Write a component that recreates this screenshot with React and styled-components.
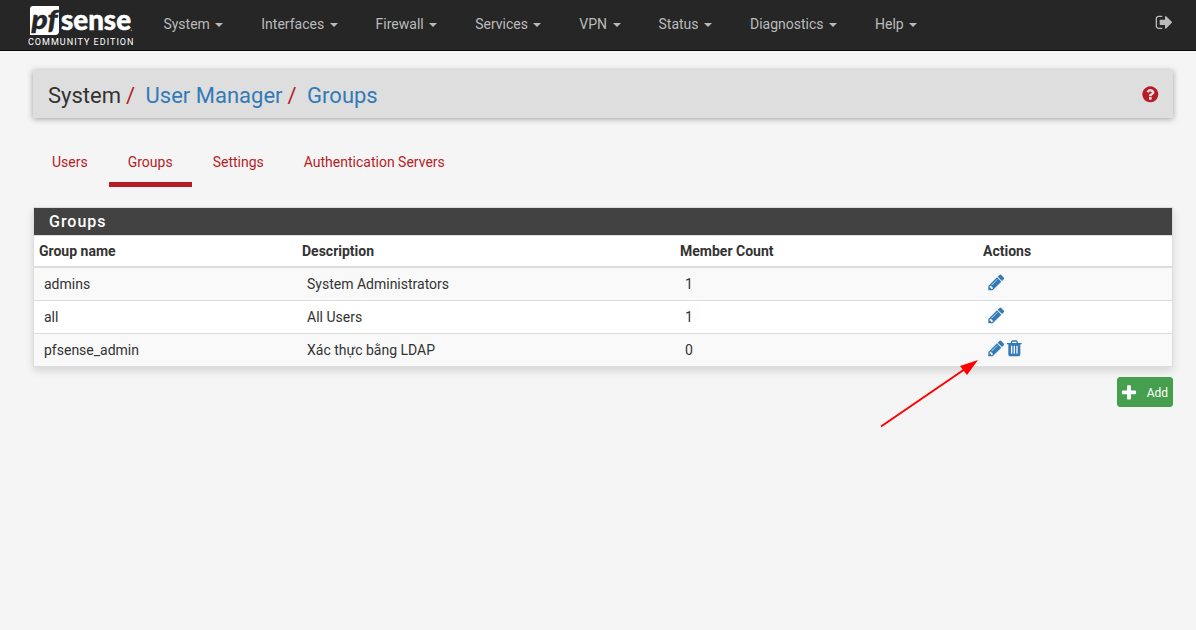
import React from "react";
import styled, { createGlobalStyle, css } from "styled-components";

const GlobalStyle = createGlobalStyle`
  *, *::before, *::after { box-sizing: border-box; }
  body {
    margin: 0;
    background: #f5f5f5;
    color: #333;
    font: 14px/20px Roboto, "Liberation Sans", sans-serif;
  }
  a { color: inherit; text-decoration: none; }
`;

const Navbar = styled.header`
  display: flex;
  align-items: flex-start;
  height: 51px;
  padding-right: 22px;
  background: #262626;
  border-bottom: 1px solid #080808;
`;

const Brand = styled.a`
  display: block;
  width: 117px;
  margin-left: 27px;
  height: 50px;
`;

const LogoMark = styled.svg`
  display: block;
  width: 117px;
  height: 50px;
`;

const Menu = styled.nav`
  display: flex;
  flex: 1;
  padding-left: 0.4px;
`;

const MenuItem = styled.a`
  display: flex;
  align-items: center;
  height: 20px;
  margin-top: 14px;
  padding: 0 19px;
  color: #bbb;

  &::after {
    content: "";
    margin: 2px 0 0 5.45px;
    border-top: 4px solid;
    border-left: 4px solid transparent;
    border-right: 4px solid transparent;
  }
`;

const Icon = styled.svg`
  display: block;
  flex: none;
  width: ${(p) => p.$size}px;
  height: ${(p) => p.$size}px;
  fill: currentColor;
`;

const Logout = styled.a`
  margin-top: 13.3px;
  color: #bbb;
`;

const Page = styled.main`
  padding: 19px 23px 0 33px;
`;

const TitleBar = styled.div`
  display: flex;
  align-items: center;
  justify-content: space-between;
  height: 48px;
  padding: 0 13.7px 0 15px;
  background: #dedede;
  box-shadow: 0 1px 6px rgba(0, 0, 0, 0.35);
`;

const Breadcrumb = styled.h1`
  display: flex;
  margin: 0;
  padding-top: 4px;
  font-size: 22px;
  font-weight: 400;
  line-height: 24px;
`;

const Crumb = styled.span`
  color: ${(p) => (p.$link ? "#337ab7" : "#333")};

  &:not(:first-child)::before {
    content: "/";
    padding: 0 10.5px 0 5px;
    color: #b71c26;
  }
`;

const Help = styled.a`
  padding-top: 1px;
  color: #b71c26;
`;

const Tabs = styled.div`
  display: flex;
  gap: 2px;
  margin-top: 25px;
`;

const Tab = styled.a`
  height: 44px;
  padding: 9px 19px 0;
  color: #b71c26;
  border-bottom: 5px solid ${(p) => (p.$active ? "#b71c26" : "transparent")};
`;

const Panel = styled.section`
  margin-top: 20px;
  border: 1px solid #ddd;
  background: #fff;
  box-shadow: 0 4px 8px rgba(0, 0, 0, 0.13);
`;

const PanelTitle = styled.h2`
  margin: 0;
  height: 27px;
  padding-left: 15px;
  background: #424242;
  color: #fff;
  font-size: 16px;
  font-weight: 500;
  line-height: 27px;
  letter-spacing: 1px;
`;

const columns = css`
  display: grid;
  grid-template-columns: 263px 378px 303px 1fr;
`;

const HeadRow = styled.div`
  ${columns}
  height: 33px;
  border-top: 1px solid #ddd;
  border-bottom: 2px solid #ddd;
  padding-left: 5px;
  font-weight: 700;
  line-height: 30px;
`;

const Row = styled.div`
  ${columns}
  height: ${(p) => (p.$first ? 32 : 33)}px;
  padding-left: 10px;
  line-height: 32px;
  border-top: ${(p) => (p.$first ? "0" : "1px solid #ddd")};
  background: ${(p) => (p.$striped ? "#f9f9f9" : "#fff")};
`;

const Actions = styled.div`
  display: flex;
  padding-top: 5px;
  margin-left: -1.5px;
  color: #337ab7;
`;

const Footer = styled.div`
  display: flex;
  justify-content: flex-end;
  margin-top: 10px;
`;

const AddButton = styled.button`
  display: flex;
  align-items: center;
  justify-content: space-between;
  width: 56px;
  height: 30px;
  padding: 1px 4px 0 2px;
  border: 1px solid #43a047;
  border-radius: 3px;
  background: #469f4e;
  color: #fff;
  font: 12px/18px Roboto, sans-serif;
`;

const Pointer = styled.svg`
  position: absolute;
  left: 875px;
  top: 355px;
  width: 110px;
  height: 76px;
  pointer-events: none;
`;

const paths = {
  pencil:
    "M491 1536l91-91-235-235-91 91v107h128v128h107zm523-928q0-22-22-22-10 0-17 7l-542 542q-7 7-7 17 0 22 22 22 10 0 17-7l542-542q7-7 7-17zm-54-192l416 416-832 832h-416v-416zm683 96q0 53-37 90l-166 166-416-416 166-165q36-38 90-38 53 0 91 38l235 234q37 39 37 91z",
  trash:
    "M704 1376v-704q0-14-9-23t-23-9h-64q-14 0-23 9t-9 23v704q0 14 9 23t23 9h64q14 0 23-9t9-23zm256 0v-704q0-14-9-23t-23-9h-64q-14 0-23 9t-9 23v704q0 14 9 23t23 9h64q14 0 23-9t9-23zm256 0v-704q0-14-9-23t-23-9h-64q-14 0-23 9t-9 23v704q0 14 9 23t23 9h64q14 0 23-9t9-23zm-544-992h448l-48-117q-7-9-17-11h-317q-10 2-17 11zm928 32v64q0 14-9 23t-23 9h-96v948q0 83-47 143.5t-113 60.5h-832q-66 0-113-58.5t-47-141.5v-952h-96q-14 0-23-9t-9-23v-64q0-14 9-23t23-9h309l70-167q15-37 54-63t79-26h320q40 0 79 26t54 63l70 167h309q14 0 23 9t9 23z",
  logout:
    "M704 1440q0 4 1 20t.5 26.5-3 23.5-10 19.5-20.5 6.5h-320q-119 0-203.5-84.5t-84.5-203.5v-704q0-119 84.5-203.5t203.5-84.5h320q13 0 22.5 9.5t9.5 22.5q0 4 1 20t.5 26.5-3 23.5-10 19.5-20.5 6.5h-320q-66 0-113 47t-47 113v704q0 66 47 113t113 47h312l11.5 1 11.5 3 8 5.5 7 9 2 13.5zm928-544q0 26-19 45l-544 544q-19 19-45 19t-45-19-19-45v-288h-448q-26 0-45-19t-19-45v-384q0-26 19-45t45-19h448v-288q0-26 19-45t45-19 45 19l544 544q19 19 19 45z",
  help:
    "M1024 1376v-192q0-14-9-23t-23-9h-192q-14 0-23 9t-9 23v192q0 14 9 23t23 9h192q14 0 23-9t9-23zm256-672q0-88-55.5-163t-138.5-116-170-41q-243 0-371 213-15 24 8 42l132 100q7 6 19 6 16 0 25-12 53-68 86-92 34-24 86-24 48 0 85.5 26t37.5 59q0 38-20 61t-68 45q-63 28-115.5 86.5t-52.5 125.5v36q0 14 9 23t23 9h192q14 0 23-9t9-23q0-19 21.5-49.5t54.5-49.5q32-18 49-28.5t46-35 44.5-48 28-60.5 12.5-81zm384 192q0 209-103 385.5t-279.5 279.5-385.5 103-385.5-103-279.5-279.5-103-385.5 103-385.5 279.5-279.5 385.5-103 385.5 103 279.5 279.5 103 385.5z",
  plus:
    "M1600 736v192q0 40-28 68t-68 28h-416v416q0 40-28 68t-68 28h-192q-40 0-68-28t-28-68v-416h-416q-40 0-68-28t-28-68v-192q0-40 28-68t68-28h416v-416q0-40 28-68t68-28h192q40 0 68 28t28 68v416h416q40 0 68 28t28 68z",
};

const Glyph = ({ name, size = 18.67 }) => (
  <Icon $size={size} viewBox="0 0 1792 1792" aria-hidden="true">
    <path d={paths[name]} />
  </Icon>
);

const Logo = () => (
  <LogoMark viewBox="0 0 117 50">
    <path d="M6 6H32V31Q32 35 28 35H3V9Q3 6 6 6Z" fill="#fff" />
    <g fontFamily="Lato, sans-serif" fontWeight="900">
      <text x="4.5" y="29.3" fontSize="27" fontStyle="italic" fill="#262626" stroke="#262626" strokeWidth="0.4" textLength="26" lengthAdjust="spacingAndGlyphs">pf</text>
      <text x="34" y="29.8" fontSize="28" fill="#fff" stroke="#fff" strokeWidth="0.5" textLength="70" lengthAdjust="spacingAndGlyphs">sense</text>
    </g>
    <circle cx="104.5" cy="30.3" r="0.8" fill="#999" />
    <text x="1" y="45" fill="#fff" fontFamily="Roboto, sans-serif" fontSize="9" textLength="105.5">COMMUNITY EDITION</text>
  </LogoMark>
);

const menu = ["System", "Interfaces", "Firewall", "Services", "VPN", "Status", "Diagnostics", "Help"];
const tabs = ["Users", "Groups", "Settings", "Authentication Servers"];
const groups = [
  { name: "admins", description: "System Administrators", members: 1 },
  { name: "all", description: "All Users", members: 1 },
  { name: "pfsense_admin", description: "Xác thực bằng LDAP", members: 0, removable: true },
];

export default function App() {
  return (
    <>
      <GlobalStyle />
      <Navbar>
        <Brand href="#"><Logo /></Brand>
        <Menu>
          {menu.map((m) => <MenuItem key={m} href="#">{m}</MenuItem>)}
        </Menu>
        <Logout href="#"><Glyph name="logout" /></Logout>
      </Navbar>
      <Page>
        <TitleBar>
          <Breadcrumb>
            <Crumb>System</Crumb>
            <Crumb $link>User Manager</Crumb>
            <Crumb $link>Groups</Crumb>
          </Breadcrumb>
          <Help href="#"><Glyph name="help" /></Help>
        </TitleBar>
        <Tabs>
          {tabs.map((t) => <Tab key={t} href="#" $active={t === "Groups"}>{t}</Tab>)}
        </Tabs>
        <Panel>
          <PanelTitle>Groups</PanelTitle>
          <HeadRow>
            <span>Group name</span>
            <span>Description</span>
            <span>Member Count</span>
            <span>Actions</span>
          </HeadRow>
          {groups.map((g, i) => (
            <Row key={g.name} $first={i === 0} $striped={i % 2 === 0}>
              <span>{g.name}</span>
              <span>{g.description}</span>
              <span>{g.members}</span>
              <Actions>
                <Glyph name="pencil" />
                {g.removable && <Glyph name="trash" />}
              </Actions>
            </Row>
          ))}
        </Panel>
        <Footer>
          <AddButton><Glyph name="plus" size={18} />Add</AddButton>
        </Footer>
      </Page>
      <Pointer viewBox="0 0 110 76">
        <path d="M6 71.5L90 14" stroke="#f00" strokeWidth="2" />
        <path d="M103 5L85 11L92 20Z" fill="#f00" />
      </Pointer>
    </>
  );
}
